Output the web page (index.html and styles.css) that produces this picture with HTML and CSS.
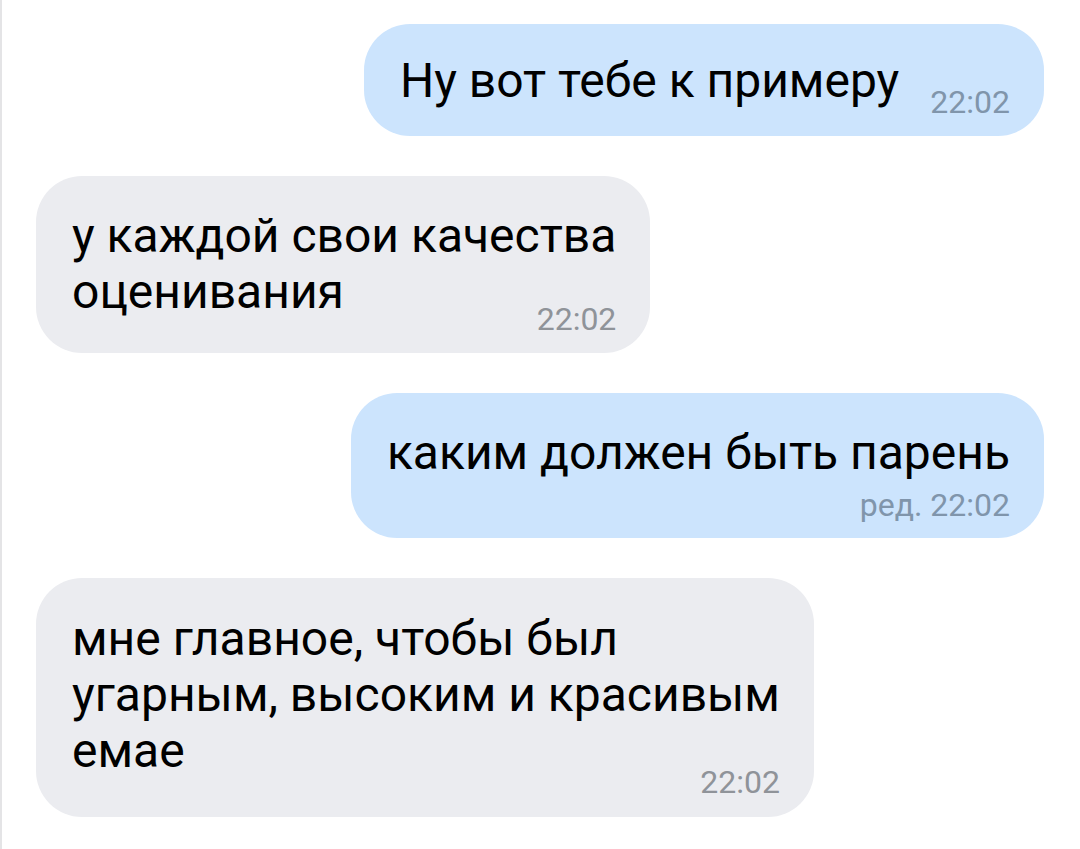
FILE: index.html
```html
<!DOCTYPE html>
<html lang="ru">
<head>
<meta charset="utf-8">
<title>Чат</title>
<link rel="stylesheet" href="styles.css">
</head>
<body>
<main class="chat">
  <div class="msg msg-out bubble-row">
    <p class="text">Ну вот тебе к примеру</p>
    <span class="time">22:02</span>
  </div>
  <div class="msg msg-in">
    <p class="text">у каждой свои качества<br>оценивания</p>
    <span class="time time-overlap">22:02</span>
  </div>
  <div class="msg msg-out msg-edited">
    <p class="text">каким должен быть парень</p>
    <span class="time time-below">ред. 22:02</span>
  </div>
  <div class="msg msg-in msg-long">
    <p class="text">мне главное, чтобы был<br>угарным, высоким и красивым<br>емае</p>
    <span class="time time-overlap">22:02</span>
  </div>
</main>
</body>
</html>
```

FILE: styles.css
```css
* { box-sizing: border-box; }
html, body {
  margin: 0;
  padding: 0;
  background: #ffffff;
}
body {
  width: 1080px;
  height: 849px;
  overflow: hidden;
  border-left: 2px solid #e4e4e6;
  font-family: Roboto, "Noto Sans", sans-serif;
}
.chat {
  display: flex;
  flex-direction: column;
  gap: 40px;
  padding: 24px 36px 0 34px;
}
.msg {
  display: flex;
  flex-direction: column;
  border-radius: 46px;
  padding: 32px 34px 16px 36px;
}
.msg-out {
  align-self: flex-end;
  background: #cce4fd;
}
.msg-in {
  align-self: flex-start;
  background: #ebecf0;
}
.bubble-row {
  flex-direction: row;
  align-items: flex-end;
  gap: 31px;
  padding-top: 29px;
}
.msg-edited { padding-bottom: 15px; }
.msg-long {
  padding-top: 33px;
  padding-bottom: 17px;
}
.text {
  margin: 0;
  font-size: 48px;
  line-height: 56px;
  color: #000;
}
.bubble-row .text { margin-bottom: 11px; }
.time {
  align-self: flex-end;
  font-size: 32px;
  line-height: 36px;
  white-space: nowrap;
  color: #8f9399;
}
.msg-out .time { color: #8095ab; }
.time-overlap { margin-top: -19px; }
.msg-long .time-overlap { margin-top: -15px; }
.time-below { margin-top: 6px; }
```
